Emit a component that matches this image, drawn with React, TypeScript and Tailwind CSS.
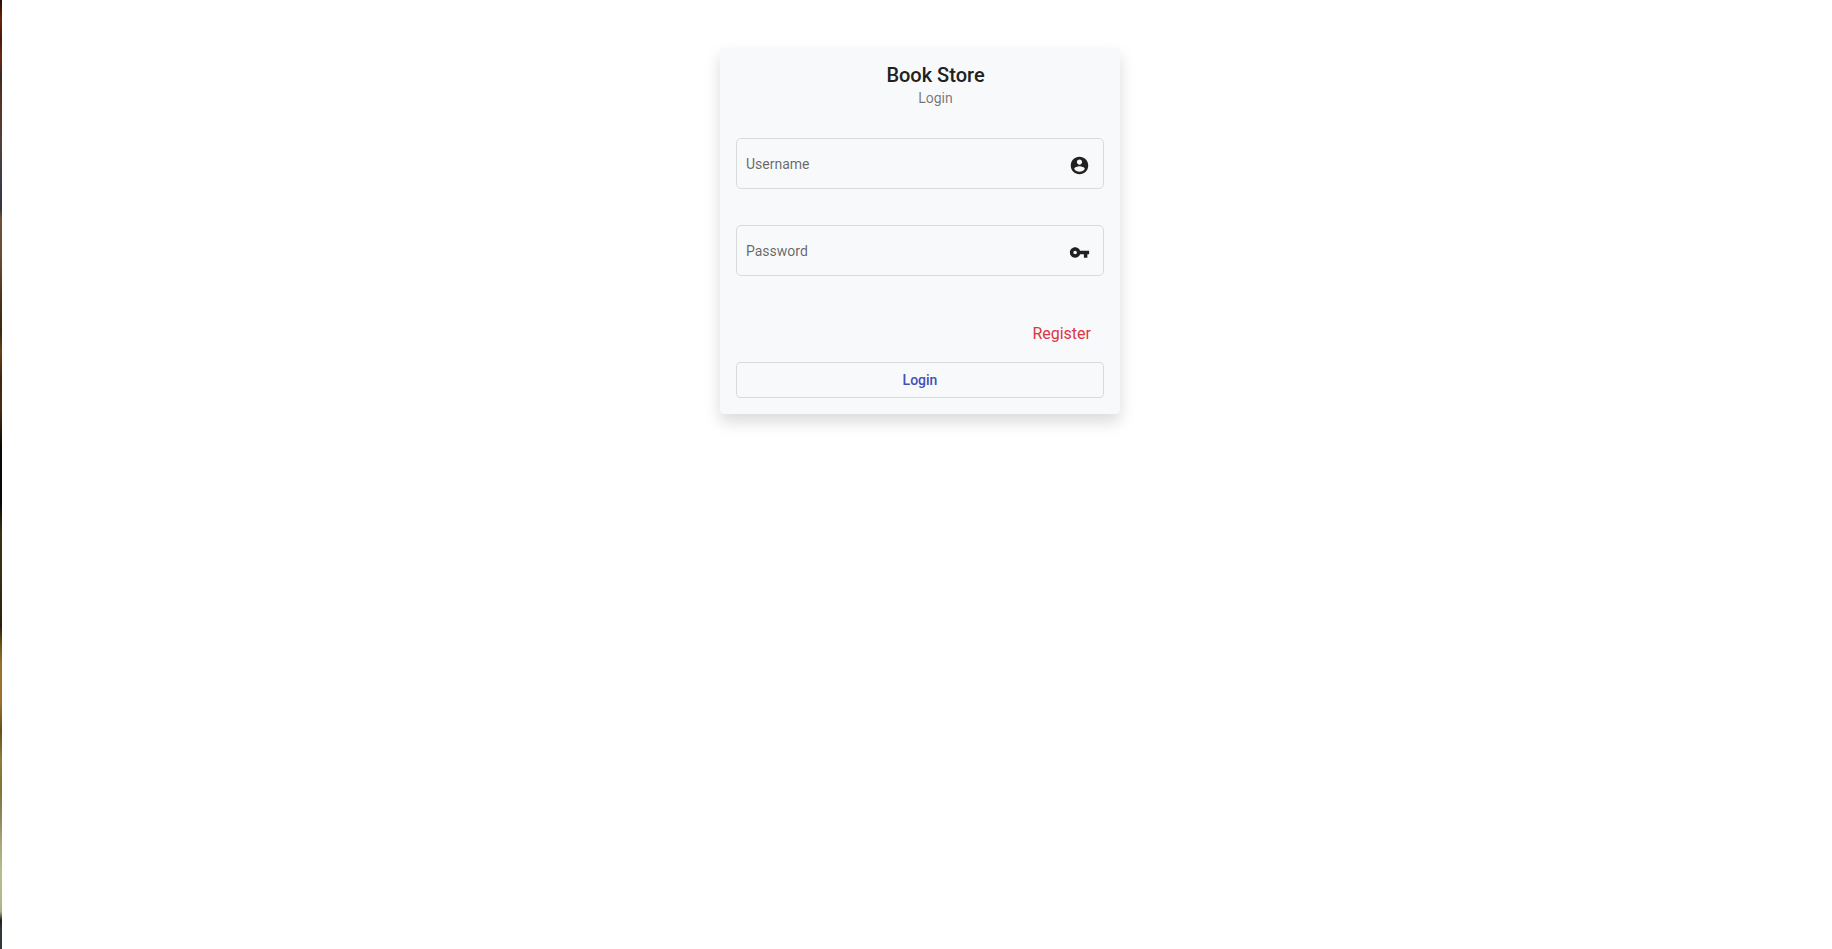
import { useState } from "react";
import type { FormEvent, ReactNode } from "react";

type FieldProps = {
  id: string;
  label: string;
  type: string;
  value: string;
  onChange: (value: string) => void;
  icon: ReactNode;
};

function AccountIcon() {
  return (
    <svg viewBox="0 0 24 24" className="size-[21px]" fill="currentColor" aria-hidden="true">
      <path d="M12 2C6.48 2 2 6.48 2 12s4.48 10 10 10 10-4.48 10-10S17.52 2 12 2zm0 3c1.66 0 3 1.34 3 3s-1.34 3-3 3-3-1.34-3-3 1.34-3 3-3zm0 14.2c-2.5 0-4.71-1.28-6-3.22.03-1.99 4-3.08 6-3.08 1.99 0 5.97 1.09 6 3.08-1.29 1.94-3.5 3.22-6 3.22z" />
    </svg>
  );
}

function KeyIcon() {
  return (
    <svg viewBox="0 0 24 24" className="size-[21px]" fill="currentColor" aria-hidden="true">
      <path d="M12.65 10C11.83 7.67 9.61 6 7 6c-3.31 0-6 2.69-6 6s2.69 6 6 6c2.61 0 4.83-1.67 5.65-4H17v4h4v-4h2v-4H12.65zM7 14c-1.1 0-2-.9-2-2s.9-2 2-2 2 .9 2 2-.9 2-2 2z" />
    </svg>
  );
}

function Field({ id, label, type, value, onChange, icon }: FieldProps) {
  return (
    <div className="flex h-[51px] items-center rounded-[5px] border border-[#d8dadc] pr-[13px] pl-[9px]">
      <div className="grid min-w-0 flex-1 items-center">
        <label
          htmlFor={id}
          className={
            value
              ? "invisible col-start-1 row-start-1 text-sm"
              : "col-start-1 row-start-1 text-sm text-black/60"
          }
        >
          {label}
        </label>
        <input
          id={id}
          type={type}
          value={value}
          onChange={(event) => onChange(event.target.value)}
          className="col-start-1 row-start-1 w-full min-w-0 bg-transparent text-sm text-black/85 outline-none"
        />
      </div>
      <span className="pt-1 text-[#212121]">{icon}</span>
    </div>
  );
}

export default function App() {
  const [username, setUsername] = useState("");
  const [password, setPassword] = useState("");
  const submit = (event: FormEvent) => event.preventDefault();

  return (
    <div className="flex min-h-screen bg-white font-['Roboto',sans-serif]">
      <div className="w-0.5 shrink-0 bg-[linear-gradient(to_bottom,#2a0a06_0%,#6e2208_2%,#4a1a0c_4%,#6a2a12_6%,#3c2a28_8%,#5a3020_10%,#53403a_15%,#3e3c46_19%,#33363f_22%,#6e5234_23%,#6b4c30_27%,#4a3018_32%,#3c2812_35%,#6c4014_37%,#3c2610_40%,#4a2c10_43%,#2c1c0c_45%,#0a0806_47%,#080808_53%,#3a3014_56%,#3a2e16_60%,#2a200a_66%,#6c541c_68%,#9a7030_70%,#9c722c_74%,#64501e_77%,#8e7c40_80%,#80743a_83%,#8a8658_86%,#a8a878_89%,#b8bc90_92%,#b0b48a_96%,#202020_97%,#30383c_98%,#30383c_100%)]" />
      <main className="flex flex-1 items-start justify-center pt-12 pl-1.5">
        <form
          onSubmit={submit}
          className="flex w-full max-w-[400px] flex-col rounded bg-[#f8f9fb] p-4 shadow-[0_8px_16px_rgba(0,0,0,0.15)]"
        >
          <header className="pl-[31px] text-center">
            <h1 className="text-xl leading-[22px] font-medium text-[#212121]">Book Store</h1>
            <p className="text-sm leading-6 text-black/54">Login</p>
          </header>
          <div className="mt-7 flex flex-col gap-9">
            <Field id="username" label="Username" type="text" value={username} onChange={setUsername} icon={<AccountIcon />} />
            <Field id="password" label="Password" type="password" value={password} onChange={setPassword} icon={<KeyIcon />} />
          </div>
          <a href="#register" className="mt-[46px] mr-[13px] self-end text-base leading-6 text-[#dc3545]">
            Register
          </a>
          <button
            type="submit"
            className="mt-4 h-9 rounded border border-[#d8dadc] text-sm font-medium text-[#3f51b5]"
          >
            Login
          </button>
        </form>
      </main>
    </div>
  );
}
